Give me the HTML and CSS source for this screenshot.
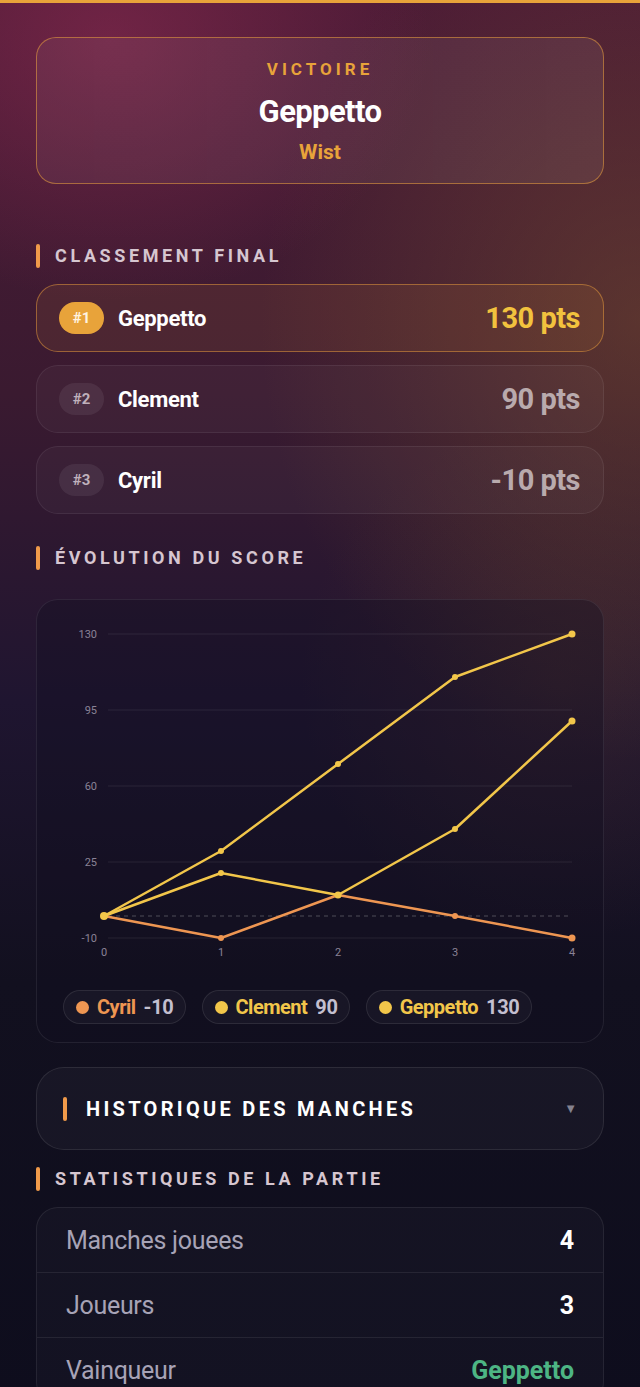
FILE: index.html
```html
<!DOCTYPE html>
<html lang="fr">
  <head>
    <meta charset="UTF-8" />
    <meta name="viewport" content="width=device-width, initial-scale=1.0" />
    <title>Fin de partie</title>
    <link rel="stylesheet" href="styles.css">
  </head>
  <body>
    <div class="top-line"></div>

    <main class="page">
      <!-- Vainqueur -->
      <section class="hero">
        <div class="hero-label">VICTOIRE</div>
        <div class="hero-name">Geppetto</div>
        <div class="hero-game">Wist</div>
      </section>

      <!-- Classement -->
      <h2 class="section-title title-rank">CLASSEMENT FINAL</h2>
      <div class="ranking">
        <div class="rank-row first">
          <span class="badge">#1</span>
          <span class="rank-name">Geppetto</span>
          <span class="rank-pts">130 pts</span>
        </div>
        <div class="rank-row">
          <span class="badge">#2</span>
          <span class="rank-name">Clement</span>
          <span class="rank-pts">90 pts</span>
        </div>
        <div class="rank-row">
          <span class="badge">#3</span>
          <span class="rank-name">Cyril</span>
          <span class="rank-pts">-10 pts</span>
        </div>
      </div>

      <!-- Graphique -->
      <h2 class="section-title title-chart">ÉVOLUTION DU SCORE</h2>
      <div class="chart-card">
        <svg class="chart" viewBox="0 0 566 365" width="566" height="365">
          <g class="grid">
            <line x1="71" y1="34" x2="535" y2="34" />
            <line x1="71" y1="110" x2="535" y2="110" />
            <line x1="71" y1="186" x2="535" y2="186" />
            <line x1="71" y1="262" x2="535" y2="262" />
            <line x1="71" y1="338" x2="535" y2="338" />
          </g>
          <line class="zero" x1="71" y1="316" x2="535" y2="316" />
          <g class="axis-y">
            <text x="60" y="38">130</text>
            <text x="60" y="114">95</text>
            <text x="60" y="190">60</text>
            <text x="60" y="266">25</text>
            <text x="60" y="342">-10</text>
          </g>
          <g class="axis-x">
            <text x="67" y="356">0</text>
            <text x="184" y="356">1</text>
            <text x="301" y="356">2</text>
            <text x="418" y="356">3</text>
            <text x="535" y="356">4</text>
          </g>
          <!-- Cyril -->
          <g class="serie orange">
            <polyline points="67,316 184,338 301,295 418,316 535,338" />
            <circle cx="184" cy="338" r="3" />
            <circle cx="301" cy="295" r="3" />
            <circle cx="418" cy="316" r="3" />
            <circle cx="535" cy="338" r="3.5" />
          </g>
          <!-- Clement -->
          <g class="serie yellow">
            <polyline points="67,316 184,273 301,295 418,229 535,121" />
            <circle cx="184" cy="273" r="3" />
            <circle cx="301" cy="295" r="3.5" />
            <circle cx="418" cy="229" r="3" />
            <circle cx="535" cy="121" r="3.5" />
          </g>
          <!-- Geppetto -->
          <g class="serie yellow">
            <polyline points="67,316 184,251 301,164 418,77 535,34" />
            <circle cx="67" cy="316" r="4" />
            <circle cx="184" cy="251" r="3" />
            <circle cx="301" cy="164" r="3" />
            <circle cx="418" cy="77" r="3" />
            <circle cx="535" cy="34" r="3.5" />
          </g>
        </svg>
        <div class="legend">
          <span class="pill"><i class="dot orange-bg"></i><b class="orange-txt">Cyril</b><em>-10</em></span>
          <span class="pill"><i class="dot yellow-bg"></i><b class="yellow-txt">Clement</b><em>90</em></span>
          <span class="pill"><i class="dot yellow-bg"></i><b class="yellow-txt">Geppetto</b><em>130</em></span>
        </div>
      </div>

      <!-- Historique -->
      <div class="history">
        <span class="history-title">HISTORIQUE DES MANCHES</span>
        <span class="arrow">▼</span>
      </div>

      <!-- Statistiques -->
      <h2 class="section-title title-stats">STATISTIQUES DE LA PARTIE</h2>
      <div class="stats">
        <div class="stat-row">
          <span class="stat-label">Manches jouees</span>
          <span class="stat-value">4</span>
        </div>
        <div class="stat-row">
          <span class="stat-label">Joueurs</span>
          <span class="stat-value">3</span>
        </div>
        <div class="stat-row">
          <span class="stat-label">Vainqueur</span>
          <span class="stat-value winner">Geppetto</span>
        </div>
      </div>
    </main>
  </body>
</html>
```

FILE: styles.css
```css
/* base */
body {
  margin: 0;
  min-height: 1387px;
  font-family: Roboto, "Noto Sans", sans-serif;
  color: #fff;
  background:
    radial-gradient(ellipse 320px 260px at 110px 40px, rgba(150, 45, 85, 0.5), transparent),
    radial-gradient(ellipse 380px 440px at 640px 320px, rgba(120, 78, 45, 0.5), transparent),
    radial-gradient(ellipse 260px 260px at 560px 680px, rgba(90, 55, 45, 0.3), transparent),
    linear-gradient(180deg, #4c1b36 0%, #3a1a30 28%, #1f1530 50%, #12101f 70%, #0e0d1d 100%);
  overflow: hidden;
}

.top-line {
  height: 3px;
  background: #e8a33a;
}

.page {
  padding: 34px 36px 0;
}

/* carte victoire */
.hero {
  border: 1px solid rgba(222, 150, 60, 0.6);
  border-radius: 20px;
  height: 147px;
  box-sizing: border-box;
  padding-top: 21px;
  text-align: center;
  background: linear-gradient(90deg, rgba(255, 255, 255, 0.05), rgba(255, 255, 255, 0.07));
}

.hero-label {
  color: #e8a33a;
  font-size: 17px;
  font-weight: 700;
  letter-spacing: 4px;
  line-height: 20px;
}

.hero-name {
  font-size: 31px;
  font-weight: 700;
  line-height: 36px;
  margin-top: 15px;
  letter-spacing: -0.6px;
}

.hero-game {
  color: #e8a33a;
  font-size: 21px;
  font-weight: 700;
  line-height: 26px;
  margin-top: 9px;
}

/* titres de section */
.section-title {
  position: relative;
  margin: 0;
  padding-left: 19px;
  height: 24px;
  line-height: 24px;
  font-size: 18px;
  font-weight: 700;
  letter-spacing: 3.6px;
  color: #d6c6d0;
}

.section-title::before {
  content: "";
  position: absolute;
  left: 0;
  top: 0;
  width: 4px;
  height: 24px;
  border-radius: 2px;
  background: #f09a4a;
}

.title-rank {
  margin-top: 60px;
  margin-bottom: 16px;
}

.title-chart {
  margin-top: 32px;
  margin-bottom: 29px;
}

.title-stats {
  margin-top: 17px;
  margin-bottom: 16px;
}

/* classement */
.ranking {
  display: flex;
  flex-direction: column;
  gap: 13px;
}

.rank-row {
  display: flex;
  align-items: center;
  height: 68px;
  box-sizing: border-box;
  padding: 0 23px 0 22px;
  border: 1px solid rgba(255, 255, 255, 0.07);
  border-radius: 22px;
  background: rgba(255, 255, 255, 0.03);
}

.rank-row.first {
  border-color: rgba(222, 150, 60, 0.55);
  background: rgba(225, 150, 60, 0.1);
}

.badge {
  width: 45px;
  height: 32px;
  line-height: 32px;
  border-radius: 16px;
  text-align: center;
  font-size: 15px;
  font-weight: 700;
  color: #bfb0bb;
  background: rgba(255, 255, 255, 0.07);
}

.first .badge {
  background: #e8a33a;
  color: #fff3e0;
}

.rank-name {
  margin-left: 14px;
  font-size: 22px;
  font-weight: 700;
  letter-spacing: -0.3px;
}

.rank-pts {
  margin-left: auto;
  font-size: 29px;
  font-weight: 700;
  letter-spacing: -0.5px;
  color: #b9aaad;
}

.first .rank-pts {
  color: #f2c23e;
}

/* graphique */
.chart-card {
  border: 1px solid rgba(255, 255, 255, 0.08);
  border-radius: 22px;
  background: rgba(18, 14, 32, 0.35);
  padding-bottom: 18px;
}

.chart {
  display: block;
}

.grid line {
  stroke: rgba(255, 255, 255, 0.08);
  stroke-width: 1;
}

.zero {
  stroke: rgba(255, 255, 255, 0.25);
  stroke-width: 1;
  stroke-dasharray: 4 4;
}

.axis-y text,
.axis-x text {
  font-family: Roboto, sans-serif;
  font-size: 11px;
  fill: #8a8296;
}

.axis-y text {
  text-anchor: end;
}

.axis-x text {
  text-anchor: middle;
}

.serie polyline {
  fill: none;
  stroke-width: 2.5;
  stroke-linejoin: round;
}

.serie.orange polyline { stroke: #ee9652; }
.serie.orange circle { fill: #ee9652; }
.serie.yellow polyline { stroke: #f2c64a; }
.serie.yellow circle { fill: #f2c64a; }

.legend {
  display: flex;
  gap: 16px;
  margin-top: 25px;
  padding-left: 26px;
}

.pill {
  display: flex;
  align-items: center;
  height: 34px;
  box-sizing: border-box;
  padding: 0 11px 0 12px;
  border: 1px solid rgba(255, 255, 255, 0.09);
  border-radius: 17px;
  background: rgba(255, 255, 255, 0.03);
  font-size: 20px;
}

.dot {
  width: 13px;
  height: 13px;
  border-radius: 50%;
  margin-right: 8px;
}

.pill b {
  font-weight: 700;
  letter-spacing: -0.5px;
}

.pill em {
  font-style: normal;
  font-weight: 700;
  margin-left: 8px;
  letter-spacing: -0.3px;
  color: #c3bfcf;
}

.orange-bg { background: #ee9652; }
.yellow-bg { background: #f2c64a; }
.orange-txt { color: #ee9652; }
.yellow-txt { color: #f2c64a; }

/* historique */
.history {
  display: flex;
  align-items: center;
  margin-top: 24px;
  height: 83px;
  box-sizing: border-box;
  padding: 0 26px 0 26px;
  border: 1px solid rgba(255, 255, 255, 0.09);
  border-radius: 28px;
  background: rgba(255, 255, 255, 0.03);
}

.history-title {
  position: relative;
  padding-left: 23px;
  font-size: 20px;
  font-weight: 700;
  letter-spacing: 3.3px;
  line-height: 24px;
}

.history-title::before {
  content: "";
  position: absolute;
  left: 0;
  top: 0;
  width: 4px;
  height: 24px;
  border-radius: 2px;
  background: #f09a4a;
}

.arrow {
  margin-left: auto;
  font-size: 13px;
  color: #85828f;
}

/* statistiques */
.stats {
  border: 1px solid rgba(255, 255, 255, 0.08);
  border-radius: 22px;
  background: rgba(255, 255, 255, 0.025);
}

.stat-row {
  display: flex;
  align-items: center;
  justify-content: space-between;
  height: 64px;
  padding: 0 29px;
  border-bottom: 1px solid rgba(255, 255, 255, 0.08);
}

.stat-label {
  font-size: 25px;
  color: #a7a3b6;
  letter-spacing: -0.3px;
}

.stat-value {
  font-size: 25px;
  font-weight: 700;
}

.stat-value.winner {
  color: #4db584;
}
```
